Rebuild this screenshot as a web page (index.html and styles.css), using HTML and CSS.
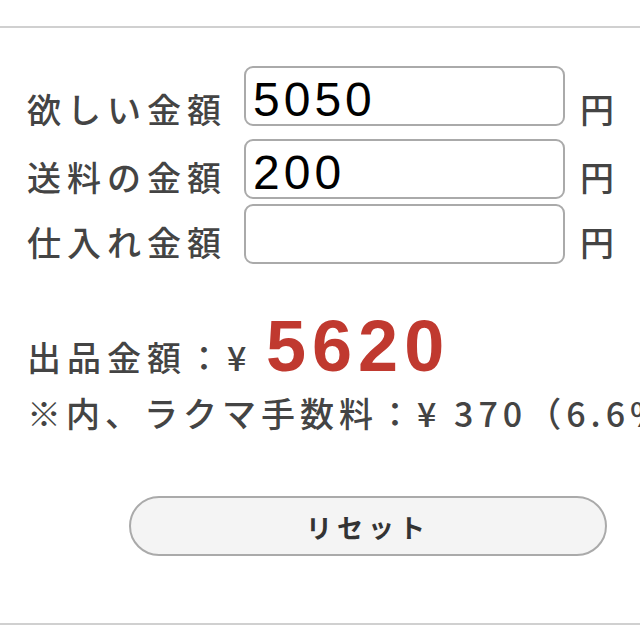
FILE: index.html
```html
<!DOCTYPE html>
<html lang="ja">
<head>
    <meta charset="UTF-8">
    <meta name="viewport" content="width=device-width, initial-scale=1.0">
    <title>ラクマ 出品金額計算</title>
    <link rel="stylesheet" href="styles.css">
</head>
<body>
    <hr class="line">

    <div class="calc">
        <div class="row row-first">
            <label class="label" for="want">欲しい金額</label>
            <input class="field" id="want" type="text" value="5050">
            <span class="unit">円</span>
        </div>
        <div class="row">
            <label class="label" for="ship">送料の金額</label>
            <input class="field" id="ship" type="text" value="200">
            <span class="unit">円</span>
        </div>
        <div class="row">
            <label class="label" for="cost">仕入れ金額</label>
            <input class="field" id="cost" type="text" value="">
            <span class="unit">円</span>
        </div>

        <div class="result">
            <p class="price">出品金額：¥ <span class="price-num">5620</span></p>
            <p class="fee">※内、ラクマ手数料：¥ 370（6.6%）</p>
        </div>

        <div class="actions">
            <button class="reset-btn" type="button">リセット</button>
        </div>
    </div>

    <hr class="line">
</body>
</html>
```

FILE: styles.css
```css
* {
    margin: 0;
    padding: 0;
    box-sizing: border-box;
}
body {
    background: #fff;
    color: #444;
    font-family: "Noto Sans CJK JP", "Noto Sans", sans-serif;
    overflow: hidden;
}
.line {
    border: none;
    border-top: 2px solid #d0d0d0;
    margin-top: 26px;
}
.calc {
    padding: 38px 0 0 27px;
    height: 569px;
}
.row {
    display: flex;
    align-items: flex-end;
    margin-bottom: 5px;
}
.row-first {
    margin-bottom: 13px;
}
.label {
    width: 217px;
    font-size: 34px;
    font-weight: 500;
    line-height: 1;
    letter-spacing: 6px;
    margin-bottom: 5px;
    white-space: nowrap;
}
.row-first .label {
    margin-bottom: 0;
}
.field {
    width: 321px;
    height: 60px;
    border: 2px solid #aaa;
    border-radius: 9px;
    padding: 6px 7px 0;
    font-family: "Liberation Sans", Arial, sans-serif;
    font-size: 48px;
    letter-spacing: 4px;
    color: #000;
    background: #fff;
    outline: none;
}
.unit {
    font-size: 34px;
    font-weight: 500;
    line-height: 1;
    margin-left: 15px;
    margin-bottom: 5px;
}
.row-first .unit {
    margin-bottom: 0;
}
.result {
    margin-top: 46px;
}
.price {
    font-size: 34px;
    font-weight: 500;
    letter-spacing: 6px;
    line-height: 1;
    white-space: nowrap;
}
.price-num {
    font-family: "Liberation Sans", Arial, sans-serif;
    font-size: 72px;
    font-weight: bold;
    color: #c0392f;
    letter-spacing: 6px;
}
.fee {
    font-size: 34px;
    font-weight: 500;
    letter-spacing: 5px;
    line-height: 1;
    margin-top: 14px;
    white-space: nowrap;
}
.actions {
    margin-top: 66px;
    padding-left: 102px;
}
.reset-btn {
    width: 478px;
    height: 60px;
    border: 2px solid #aaa;
    border-radius: 30px;
    background: #f4f4f4;
    color: #333;
    font-family: "Noto Sans CJK JP", sans-serif;
    font-size: 26px;
    font-weight: bold;
    letter-spacing: 5px;
}
```
